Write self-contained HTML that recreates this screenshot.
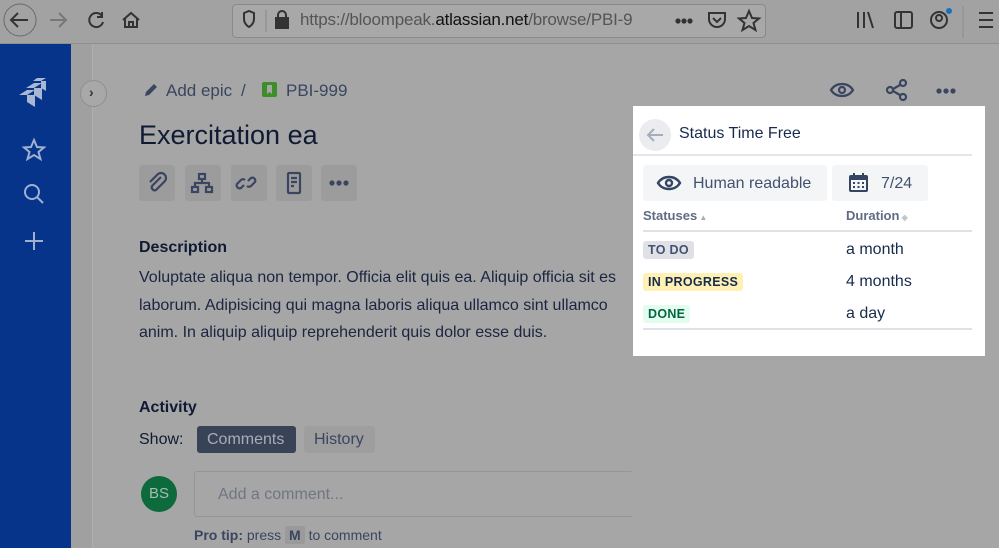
<!DOCTYPE html>
<html><head><meta charset="utf-8"><style>
*{margin:0;padding:0;box-sizing:border-box}
body{width:999px;height:548px;overflow:hidden;background:#a6a6a6;font-family:"Liberation Sans",Arial,sans-serif;position:relative;color:#0f1a33}
.abs{position:absolute}
.top{left:0;top:0;width:999px;height:44px;background:#a2a2a2;border-bottom:1px solid #8e8e8e}
.url{left:232px;top:4px;width:534px;height:34px;border:1px solid #8a8a8a;border-radius:4px;background:#a8a8a8}
.side{left:0;top:44px;width:71px;height:504px;background:#06348a}
.gut{left:71px;top:44px;width:22px;height:504px;background:#a0a0a0;border-right:1px solid #b0b0b0}
.t{position:absolute;white-space:nowrap}
.ib{position:absolute;top:165px;width:36px;height:36px;background:#9c9c9c;border-radius:3px}
.panel{left:633px;top:106px;width:352px;height:250px;background:#fff}
.tag{position:absolute;font-size:12.5px;font-weight:bold;padding:2px 5px;border-radius:3px;letter-spacing:.3px}
</style></head><body>
<div class="abs top"></div>
<svg class="abs" style="left:0;top:0" width="999" height="44" fill="none" stroke="#333" stroke-width="2">
<circle cx="20" cy="20" r="16" stroke="#6a6a6a" stroke-width="1"/>
<path d="M28 20H12M18 13l-7 7 7 7"/>
<path d="M66 20H50M59 13l7 7-7 7" stroke="#777"/>
<path d="M102 16a7 7 0 1 0 1 6M102 12v5h-5"/>
<path d="M123 20l8-7 8 7M125 18v9h12v-9M129 27v-5h4v5"/>
<path d="M858 12v16M864 12v16M868 12l5 16" />
<rect x="895" y="12" width="17" height="16" rx="2"/><path d="M901 12v16"/>
<circle cx="939" cy="20" r="8"/><circle cx="939" cy="18" r="3"/>
<circle cx="949" cy="11" r="3" fill="#1a6fc0" stroke="none"/>
<path d="M979 13h14M979 20h14M979 27h14"/>
<path d="M963 6v32" stroke="#8c8c8c" stroke-width="1"/>
</svg>
<div class="abs url"></div>
<svg class="abs" style="left:232px;top:4px" width="534" height="34" fill="none" stroke="#333" stroke-width="2">
<path d="M12 9l5-2 5 2v6c0 4-3 7-5 8-2-1-5-4-5-8z"/>
<path d="M34 6v22" stroke="#888" stroke-width="1"/>
<rect x="44" y="14" width="12" height="10" fill="#333"/><path d="M46 14v-3a4 4 0 0 1 8 0v3"/>
<circle cx="446" cy="17" r="1.6" fill="#333"/><circle cx="452" cy="17" r="1.6" fill="#333"/><circle cx="458" cy="17" r="1.6" fill="#333"/>
<path d="M477 9h16v6a8 8 0 0 1-16 0z M481 14l4 4 4-4"/>
<path d="M517 7l3 7 7 .5-5.5 4.5 2 7-6.5-4-6.5 4 2-7-5.5-4.5 7-.5z"/>
</svg>
<div class="t" style="left:300px;top:10px;font-size:17px;color:#555;letter-spacing:-0.2px">https://bloompeak.<span style="color:#111">atlassian.net</span>/browse/PBI-9</div>
<div class="abs side"></div>
<svg class="abs" style="left:0;top:44px" width="71" height="220" fill="none" stroke="#9fb0d0" stroke-width="2">
<g fill="#a9b7d3" stroke="none">
<path d="M19 51l8-5h8l-8 5z"/><path d="M27 51h8v12l-8-5z"/>
<path d="M26 44l8-5h8l-8 5z"/><path d="M34 44h8v12l-8-5z"/>
<path d="M33 37l0 0 4-3h9l-5 3z"/><path d="M41 37h5v10l-5-3z"/>
</g>
<path d="M34 96l3 7 7 .5-5.5 4.5 2 7-6.5-4-6.5 4 2-7-5.5-4.5 7-.5z"/>
<circle cx="32" cy="148" r="7"/><path d="M37 153l6 6"/>
<path d="M34 188v18M25 197h18"/>
</svg>
<div class="abs gut"></div>
<div class="abs" style="left:80px;top:80px;width:27px;height:27px;border-radius:50%;background:#a8a8a8;border:1px solid #8f8f8f"></div>
<div class="t" style="left:89px;top:84px;font-size:14px;color:#333;font-weight:bold">›</div>
<svg class="abs" style="left:143px;top:82px" width="16" height="16"><path d="M2 14l1-4 8-8 3 3-8 8z" fill="#3a4560"/></svg>
<div class="t" style="left:166px;top:81px;font-size:17px;color:#3a4560">Add epic</div>
<div class="t" style="left:241px;top:81px;font-size:17px;color:#3a4560">/</div>
<div class="abs" style="left:262px;top:82px;width:15px;height:15px;background:#3d8d2a;border-radius:2px"></div>
<svg class="abs" style="left:262px;top:82px" width="15" height="15"><path d="M5 3h5v9l-2.5-2-2.5 2z" fill="#a6a6a6"/></svg>
<div class="t" style="left:286px;top:81px;font-size:17px;color:#3a4560">PBI-999</div>
<div class="t" style="left:139px;top:120px;font-size:27px;color:#0f1a33">Exercitation ea</div>
<div class="ib" style="left:139px"></div><div class="ib" style="left:185px"></div><div class="ib" style="left:231px"></div><div class="ib" style="left:276px"></div><div class="ib" style="left:321px"></div>
<svg class="abs" style="left:139px;top:165px" width="220" height="36" fill="none" stroke="#3a4560" stroke-width="2.2">
<path d="M22 12l-9 9a3 3 0 0 0 4 4l9-9a5 5 0 0 0-7-7l-8 8"/>
<rect x="60" y="9" width="6" height="5"/><rect x="53" y="22" width="6" height="5"/><rect x="67" y="22" width="6" height="5"/><path d="M63 14v4M56 22v-4h14v4"/>
<path d="M105 20l-3 3a3 3 0 0 1-4-4l4-4a3 3 0 0 1 4 0M109 16l3-3a3 3 0 0 1 4 4l-4 4a3 3 0 0 1-4 0"/>
<rect x="149" y="8" width="12" height="20" rx="1"/><path d="M152 13h6M152 17h6M152 21h3"/>
<circle cx="193" cy="18" r="1.5" fill="#3a4560"/><circle cx="200" cy="18" r="1.5" fill="#3a4560"/><circle cx="207" cy="18" r="1.5" fill="#3a4560"/>
</svg>
<svg class="abs" style="left:828px;top:76px" width="140" height="28" fill="none" stroke="#3a4560" stroke-width="2.2">
<path d="M3 14c5-8 17-8 22 0-5 8-17 8-22 0z"/><circle cx="14" cy="14" r="3"/>
<circle cx="62" cy="14" r="3"/><circle cx="75" cy="7" r="3"/><circle cx="75" cy="21" r="3"/><path d="M65 13l7-4M65 15l7 4"/>
<circle cx="111" cy="15" r="1.5" fill="#3a4560"/><circle cx="118" cy="15" r="1.5" fill="#3a4560"/><circle cx="125" cy="15" r="1.5" fill="#3a4560"/>
</svg>
<div class="t" style="left:139px;top:239px;font-size:16px;font-weight:bold">Description</div>
<div class="t" style="left:139px;top:264px;font-size:16px;line-height:27.5px;color:#1a2540">Voluptate aliqua non tempor. Officia elit quis ea. Aliquip officia sit es<br>laborum. Adipisicing qui magna laboris aliqua ullamco sint ullamco<br>anim. In aliquip aliquip reprehenderit quis dolor esse duis.</div>
<div class="t" style="left:139px;top:399px;font-size:16px;font-weight:bold">Activity</div>
<div class="t" style="left:139px;top:431px;font-size:16px">Show:</div>
<div class="abs" style="left:197px;top:426px;width:99px;height:27px;background:#394357;border-radius:3px"></div>
<div class="t" style="left:207px;top:431px;font-size:16px;color:#a7adb8">Comments</div>
<div class="abs" style="left:304px;top:426px;width:71px;height:27px;background:#9e9e9e;border-radius:3px"></div>
<div class="t" style="left:314px;top:431px;font-size:16px;color:#3a4560">History</div>
<div class="abs" style="left:141px;top:476px;width:36px;height:36px;border-radius:50%;background:#0d6a3c"></div>
<div class="t" style="left:149px;top:485px;font-size:15px;color:#a7bdb2">BS</div>
<div class="abs" style="left:194px;top:471px;width:439px;height:46px;border:1px solid #959595;border-radius:3px;border-right:none"></div>
<div class="t" style="left:218px;top:486px;font-size:16px;color:#6f7582">Add a comment...</div>
<div class="t" style="left:194px;top:527px;font-size:14px;color:#3a4560"><b>Pro tip:</b> press <span style="background:#9a9a9a;padding:1px 4px;font-weight:bold;border-radius:2px">M</span> to comment</div>
<div class="abs panel"></div>
<div class="abs" style="left:639px;top:119px;width:32px;height:32px;border-radius:50%;background:#ebecf0"></div>
<svg class="abs" style="left:639px;top:119px" width="32" height="32" fill="none" stroke="#a5adba" stroke-width="2"><path d="M24 16H9M15 10l-6 6 6 6"/></svg>
<div class="t" style="left:679px;top:125px;font-size:16px;color:#172b4d">Status Time Free</div>
<div class="abs" style="left:633px;top:154px;width:339px;height:2px;background:#e4e6ea"></div>
<div class="abs" style="left:643px;top:165px;width:184px;height:36px;background:#f4f5f7;border-radius:3px"></div>
<svg class="abs" style="left:656px;top:172px" width="26" height="22" fill="none" stroke="#344563" stroke-width="2.4"><path d="M2 11c5-8 17-8 22 0-5 8-17 8-22 0z"/><circle cx="13" cy="11" r="3"/></svg>
<div class="t" style="left:693px;top:175px;font-size:16px;color:#42526e">Human readable</div>
<div class="abs" style="left:832px;top:165px;width:96px;height:36px;background:#f4f5f7;border-radius:3px"></div>
<svg class="abs" style="left:848px;top:172px" width="22" height="22"><rect x="1" y="3" width="19" height="17" rx="2" fill="#344563"/><rect x="3" y="8" width="15" height="10" fill="#f4f5f7"/><g fill="#344563"><rect x="5" y="10" width="2" height="2"/><rect x="9.5" y="10" width="2" height="2"/><rect x="14" y="10" width="2" height="2"/><rect x="5" y="14" width="2" height="2"/><rect x="9.5" y="14" width="2" height="2"/><rect x="14" y="14" width="2" height="2"/><rect x="5" y="1" width="2" height="4"/><rect x="14" y="1" width="2" height="4"/></g></svg>
<div class="t" style="left:881px;top:175px;font-size:16px;color:#42526e">7/24</div>
<div class="t" style="left:643px;top:208px;font-size:13px;font-weight:bold;color:#5e6c84">Statuses<span style="font-size:8px;color:#a5adba"> ▲</span></div>
<div class="t" style="left:846px;top:208px;font-size:13px;font-weight:bold;color:#5e6c84">Duration<span style="font-size:8px;color:#c1c7d0"> ◆</span></div>
<div class="abs" style="left:643px;top:230px;width:329px;height:2px;background:#dfe1e6"></div>
<div class="tag" style="left:643px;top:241px;background:#dfe1e6;color:#42526e">TO DO</div>
<div class="t" style="left:846px;top:241px;font-size:16px;color:#172b4d">a month</div>
<div class="tag" style="left:643px;top:273px;background:#fff0b3;color:#172b4d">IN PROGRESS</div>
<div class="t" style="left:846px;top:273px;font-size:16px;color:#172b4d">4 months</div>
<div class="tag" style="left:643px;top:305px;background:#e3fcef;color:#006644">DONE</div>
<div class="t" style="left:846px;top:305px;font-size:16px;color:#172b4d">a day</div>
<div class="abs" style="left:643px;top:328px;width:329px;height:2px;background:#dfe1e6"></div>
</body></html>
